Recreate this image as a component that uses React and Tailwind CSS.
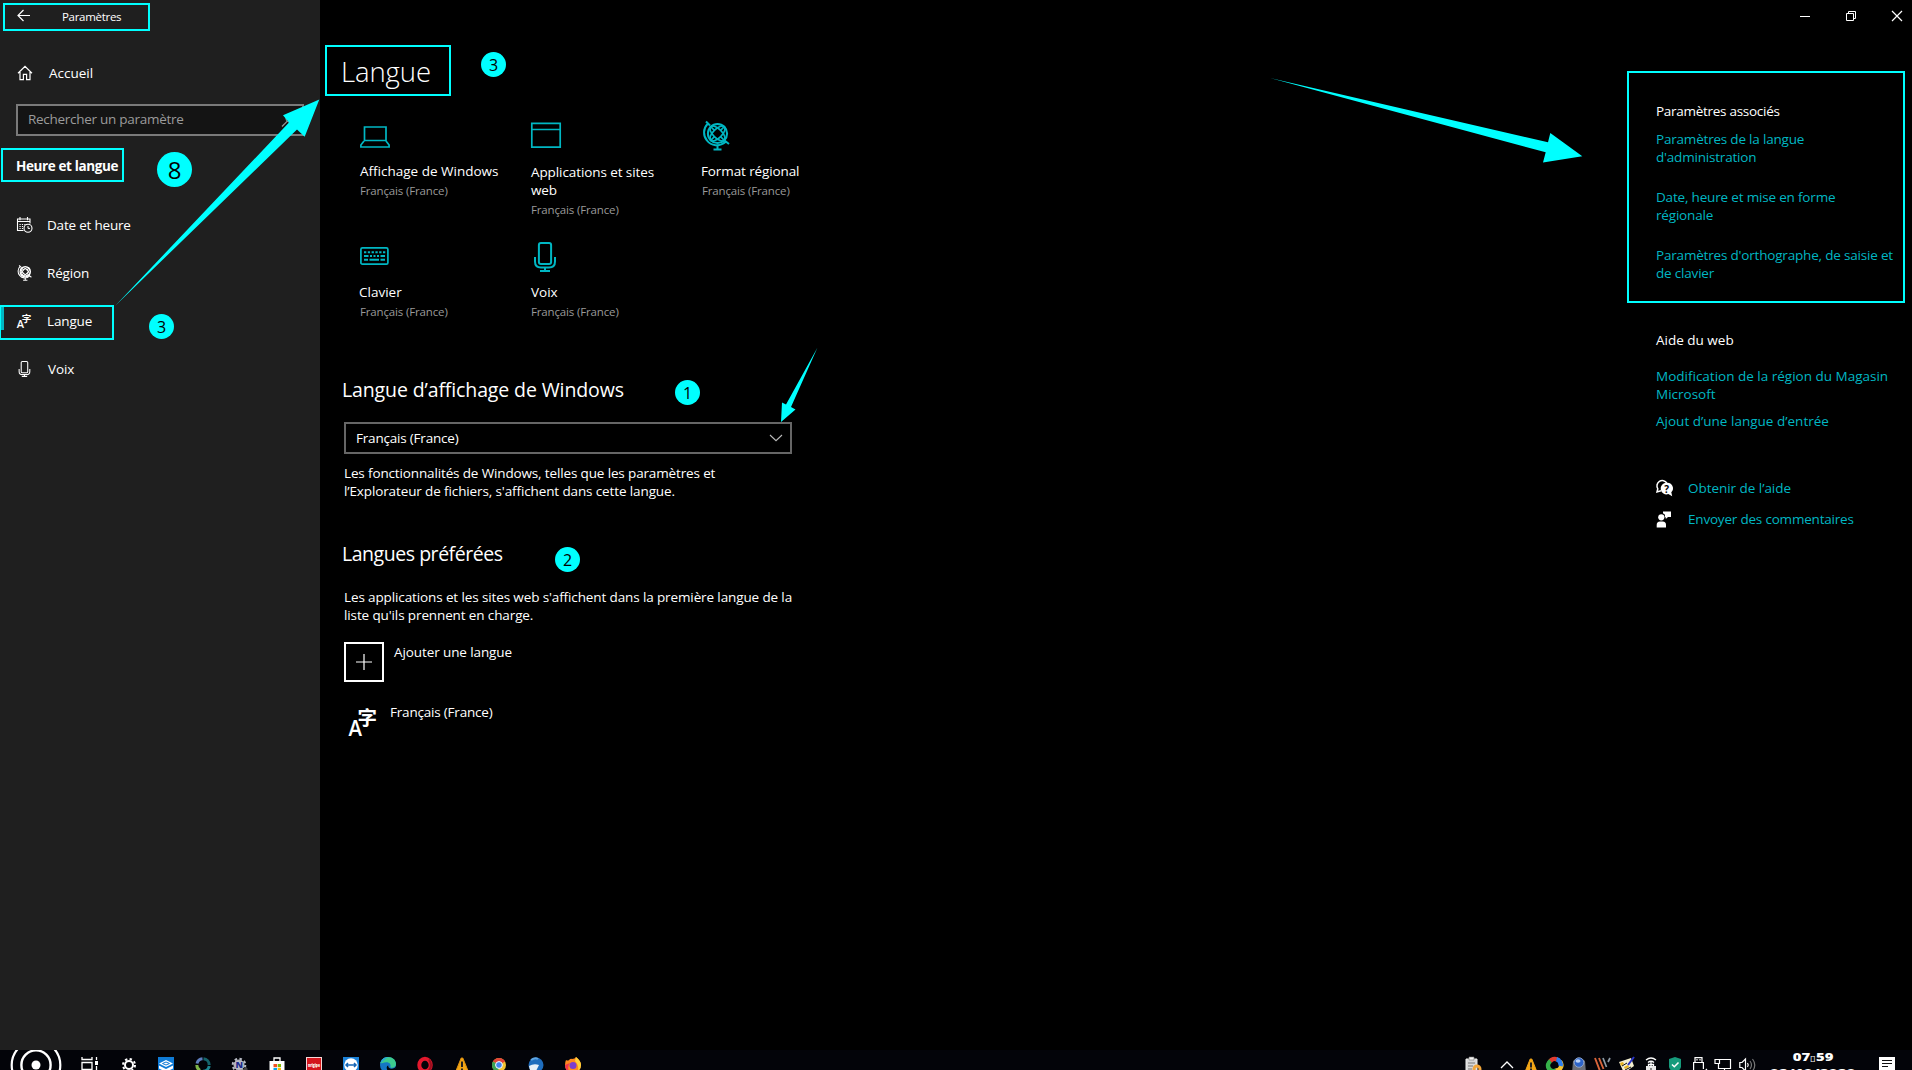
import React from "react";

const Svg = ({ className, box = "0 0 16 16", children }) => (
  <svg
    viewBox={box}
    fill="none"
    stroke="currentColor"
    className={`shrink-0 overflow-visible ${className}`}
  >
    {children}
  </svg>
);

/* ---------- settings icons ---------- */

const HomeIcon = () => (
  <Svg className="w-4 h-4">
    <path d="M1 8.2 8 1.4l7 6.8M3 7v7.6h3.4V9.4h3.2v5.2H13V7" strokeWidth="1.2" />
  </Svg>
);

const CalendarIcon = () => (
  <Svg className="w-4 h-4">
    <path d="M6.500 13.500H.5V2h12.500v4.500M.5 4.500h12.500M3 0v3.200M10.500 0v3.200" strokeWidth="1.1" />
    <path d="M2.500 7.500h7M2.500 9.500h4.500M2.500 11.500h3.500" strokeWidth="1.2" strokeDasharray="1.2 1.2" />
    <circle cx="11" cy="11.300" r="4" strokeWidth="1.1" />
    <path d="M11 9v2.400h2" strokeWidth="1" />
  </Svg>
);

const GlobeIcon = ({ className, bold }) => (
  <Svg className={className} box="0 0 30 30">
    <circle cx="15.5" cy="12.5" r="9.6" strokeWidth={bold ? 2.4 : 2} />
    <g strokeWidth={bold ? 2 : 1.7}>
      <ellipse cx="15.5" cy="12.5" rx="9.6" ry="4.500" transform="rotate(45 15.5 12.5)" />
      <ellipse cx="15.5" cy="12.5" rx="4.500" ry="9.6" transform="rotate(45 15.5 12.5)" />
      <path d="m8.700 5.700 4 4M18.300 15.300l4 4M22.300 5.700l-4 4M12.700 15.300l-4 4" />
    </g>
    <path d="M4 .5 8 4.500M22.500 19.500l4.500 3.500M5.500 3C1 7.500 1 15 5 19.500c4 5.500 12.500 6.500 18.500 1.500" strokeWidth="2" />
    <path d="M15.500 24v4M11.500 28.500h8" strokeWidth="2" />
  </Svg>
);

const MicIcon = ({ className }) => (
  <Svg className={className} box="0 0 30 30">
    <rect x="7.900" y="1" width="12.200" height="21" rx="2" strokeWidth="2" />
    <path d="M4 15v4.500q0 6 6 6h8q6 0 6-6V15M14 26v3M9 29h10" strokeWidth="2" />
  </Svg>
);

const LaptopIcon = () => (
  <Svg className="w-[30px] h-[30px]" box="0 0 30 30">
    <path d="M4.500 19.500v-13.500h21.500v13.500M4 19.500h22.500M4 20 .9 24v2h28.200v-2L26 20" strokeWidth="1.700" />
  </Svg>
);

const WindowIcon = () => (
  <Svg className="w-[30px] h-[30px]" box="0 0 30 30">
    <path d="M.8 2.300h28.400v23.900H.8zM.8 8.500h28.400" strokeWidth="1.700" />
  </Svg>
);

const KeyboardIcon = () => (
  <Svg className="w-[30px] h-[30px]" box="0 0 30 30">
    <rect x=".9" y="5.900" width="27" height="16.300" rx="1.500" strokeWidth="1.700" />
    <g strokeWidth="2">
      <path d="M4 10.300h21.500" strokeDasharray="2.300 1.500" />
      <path d="M4 14h4.500M10 14h2M13.500 14h2M17 14h2M20.500 14H25" />
      <path d="M4 17.800h4M9.500 17.800h9.500M20.500 17.800H25" />
    </g>
  </Svg>
);

const LangIcon = ({ small }) =>
  small ? (
    <Svg className="w-4 h-[18px]" box="0 0 16 18">
      <g fill="currentColor" stroke="none">
        <text x="-0.300" y="16" fontSize="11" fontWeight="600" fontFamily="Open Sans">A</text>
        <text x="4.800" y="9.500" fontSize="9.500" fontWeight="700" fontFamily="Noto Sans CJK SC">字</text>
      </g>
    </Svg>
  ) : (
    <Svg className="w-[30px] h-[30px]" box="0 0 30 30">
      <g fill="currentColor" stroke="none">
        <text x="0.500" y="28.500" fontSize="21" fontWeight="600" fontFamily="Open Sans" textLength="13.500" lengthAdjust="spacingAndGlyphs">A</text>
        <text x="9.500" y="17.500" fontSize="19.500" fontWeight="700" fontFamily="Noto Sans CJK SC">字</text>
      </g>
    </Svg>
  );

const HelpIcon = () => (
  <Svg className="w-[17px] h-[17px]" box="0 0 17 17">
    <path d="M5 10.800 1 12l.8-3.200A5.300 5.300 0 1 1 10.800 3" strokeWidth="1.500" />
    <path d="M10.500 2.800a5.800 5.800 0 1 0 1.800 11.300l3.900 2.200-.9-4a5.600 5.600 0 0 0-4.800-9.500z" fill="#fff" stroke="none" />
    <text x="8.200" y="12.500" fontSize="10" fontWeight="700" fontFamily="Open Sans" fill="#000" stroke="none">?</text>
  </Svg>
);

const FeedbackIcon = () => (
  <Svg className="w-[17px] h-[17px]" box="0 0 17 17">
    <g fill="#fff" stroke="none">
      <path d="M7 0.500h8v5.500h-3L9.800 8V6.500L8.800 6 9 3.800 7 2.300z" />
      <circle cx="5.300" cy="6.300" r="3.100" />
      <path d="M.7 16.500v-2.500q0-3.500 3.300-3.500h2.700q3.300 0 3.300 3.500v2.500z" />
    </g>
  </Svg>
);

/* ---------- annotations ---------- */

const Frame = ({ className }) => (
  <div className={`absolute border-2 border-[#00ffff] ${className}`} />
);

const Badge = ({ className, n }) => (
  <div
    className={`absolute rounded-full bg-[#00ffff] text-black flex items-center justify-center ${className}`}
  >
    {n}
  </div>
);

const Annotations = () => (
  <>
    <Frame className="left-[3px] top-[3px] w-[147px] h-[28px]" />
    <Frame className="left-[1px] top-[148px] w-[123px] h-[34px]" />
    <Frame className="left-[-1px] top-[305px] w-[115px] h-[35px]" />
    <Frame className="left-[325px] top-[45px] w-[126px] h-[51px]" />
    <Frame className="left-[1627px] top-[71px] w-[278px] h-[232px]" />
    <Badge n="8" className="left-[157px] top-[152px] w-[35px] h-[35px] text-[24px]" />
    <Badge n="3" className="left-[149px] top-[314px] w-[25px] h-[25px] text-[16px]" />
    <Badge n="3" className="left-[481px] top-[52px] w-[25px] h-[25px] text-[16px]" />
    <Badge n="1" className="left-[675px] top-[380px] w-[25px] h-[25px] text-[16px]" />
    <Badge n="2" className="left-[555px] top-[547px] w-[25px] h-[25px] text-[16px]" />
    <svg
      viewBox="0 0 1912 1070"
      className="absolute inset-0 w-[1912px] h-[1070px] pointer-events-none"
      fill="#00ffff"
    >
      <path d="M115 306 289 122.500 283 115.300 319.300 99.500 304.700 136.700 297 129.500z" />
      <path d="M817.500 347.500 786 404.500 782 402.500 781 422 795.500 409.500 791 407z" />
      <path d="M1266 77 1548 142.300 1550.300 133 1582.300 156.300 1543 162.400 1545.700 152.300z" />
    </svg>
  </>
);

/* ---------- sidebar ---------- */

const navItems = [
  { label: "Date et heure", icon: <CalendarIcon />, text: "left-[47px] tracking-[-0.2px]" },
  { label: "Région", icon: <GlobeIcon className="w-4 h-4" bold />, text: "left-[47px] tracking-[-0.17px]" },
  { label: "Langue", icon: <LangIcon small />, text: "left-[47px] tracking-[-0.15px]", active: true },
  { label: "Voix", icon: <MicIcon className="w-4 h-4" />, text: "left-[48px] tracking-[-0.1px]" },
];

const Sidebar = () => (
  <aside className="w-[320px] shrink-0 h-full bg-[#1f1f1f] flex flex-col">
    <div className="flex items-center h-8 pl-[17px]">
      <Svg className="w-[14px] h-[14px]" box="0 0 14 14">
        <path d="M13 6.500H1.200M6.500 1 1 6.500 6.500 12" strokeWidth="1.200" />
      </Svg>
      <span className="ml-[31px] mt-px text-[11.5px] leading-4 tracking-[-0.3px]">Paramètres</span>
    </div>

    <div className="flex items-center mt-[32px] h-[18px] pl-[17px]">
      <HomeIcon />
      <span className="ml-4">Accueil</span>
    </div>

    <div className="ml-4 mt-[22px] w-[288px] h-8 shrink-0 border-2 border-[#7a7a7a] bg-[#141414] flex items-center justify-between pl-[10px] pr-[5px] text-[#9b9b9b]">
      <span className="tracking-[-0.28px] -mt-0.5">Rechercher un paramètre</span>
      <Svg className="w-4 h-4">
        <circle cx="9.500" cy="6" r="4.500" strokeWidth="1.200" />
        <path d="M6.300 9.200 1 14.500" strokeWidth="1.200" />
      </Svg>
    </div>

    <div className="mt-[21px] ml-4 font-bold tracking-[-0.38px]">Heure et langue</div>

    <nav className="mt-[26px]">
      {navItems.map((item) => (
        <div key={item.label} className="flex items-center h-12 pb-px">
          <span
            className={`w-1 h-6 mr-[13px] mb-[6px] ${item.active ? "bg-[#00b7c3]" : "bg-transparent"}`}
          />
          {item.icon}
          <span className={`absolute ${item.text}`}>{item.label}</span>
        </div>
      ))}
    </nav>
  </aside>
);

/* ---------- main ---------- */

const tiles = [
  { icon: <LaptopIcon />, lines: ["Affichage de Windows"], text: "pl-px tracking-normal" },
  { icon: <WindowIcon />, lines: ["Applications et sites", "web"], text: "pl-px tracking-[-0.09px]" },
  { icon: <GlobeIcon className="w-[30px] h-[30px]" />, lines: ["Format régional"], text: "tracking-[-0.11px]" },
  { icon: <KeyboardIcon />, lines: ["Clavier"], text: "tracking-normal" },
  { icon: <MicIcon className="w-[30px] h-[30px]" />, lines: ["Voix"], text: "pl-px tracking-normal" },
];

const Content = () => (
  <section className="w-[500px] pl-[22px]">
    <h1 className="mt-[22px] -ml-px text-[27.5px] leading-9 font-light tracking-[-0.1px]">
      Langue
    </h1>

    <div className="mt-[31px] ml-[17px] grid grid-cols-[171px_171px_171px] auto-rows-[121px]">
      {tiles.map((tile) => (
        <div key={tile.lines[0]}>
          <div className="text-[#00b7c3] ml-px">{tile.icon}</div>
          <div className={tile.lines.length > 1 ? "mt-3" : "mt-[11px]"}>
            {tile.lines.map((line) => (
              <div key={line} className={`whitespace-nowrap ${tile.text}`}>
                {line}
              </div>
            ))}
          </div>
          <div className="mt-[3px] ml-px text-[11.5px] leading-4 tracking-[-0.15px] text-[#999]">
            Français (France)
          </div>
        </div>
      ))}
    </div>

    <h2 className="mt-[14px] text-[19.5px] leading-[26px] tracking-[-0.12px]">
      Langue d’affichage de Windows
    </h2>
    <div className="mt-[19px] ml-0.5 w-[448px] h-8 border-2 border-[#666] flex items-center justify-between pl-[10px] pr-[7px]">
      <span className="tracking-[-0.2px]">Français (France)</span>
      <Svg className="w-[14px] h-[14px] text-[#bbb]" box="0 0 14 14">
        <path d="m1 4 6 5.700 6-5.700" strokeWidth="1.100" />
      </Svg>
    </div>
    <div className="mt-[10px] ml-0.5 whitespace-nowrap">
      <div className="tracking-[-0.14px]">
        Les fonctionnalités de Windows, telles que les paramètres et
      </div>
      <div className="tracking-[-0.12px]">
        l’Explorateur de fichiers, s'affichent dans cette langue.
      </div>
    </div>

    <h2 className="mt-[41px] text-[19.5px] leading-[26px] tracking-[-0.46px]">
      Langues préférées
    </h2>
    <div className="mt-[21px] ml-0.5 whitespace-nowrap tracking-[-0.12px]">
      <div>Les applications et les sites web s'affichent dans la première langue de la</div>
      <div>liste qu'ils prennent en charge.</div>
    </div>

    <div className="mt-[18px] ml-0.5 flex">
      <div className="w-10 h-10 border-2 border-white flex items-center justify-center">
        <Svg className="w-4 h-4">
          <path d="M8 0v16M0 8h16" strokeWidth="1.200" />
        </Svg>
      </div>
      <span className="ml-[10px] mt-px tracking-[-0.1px]">Ajouter une langue</span>
    </div>
    <div className="mt-[21px] ml-[6px] flex">
      <div className="mt-[4px]">
        <LangIcon />
      </div>
      <span className="ml-3 tracking-[-0.2px]">Français (France)</span>
    </div>
  </section>
);

const Related = () => (
  <section className="ml-auto w-[256px] pt-[70px] whitespace-nowrap text-[#00b7c3]">
    <div className="text-white tracking-[-0.28px]">Paramètres associés</div>
    <div className="mt-[10px] tracking-[-0.2px]">
      <div>Paramètres de la langue</div>
      <div>d'administration</div>
    </div>
    <div className="mt-[22px] tracking-[-0.18px]">
      <div>Date, heure et mise en forme</div>
      <div>régionale</div>
    </div>
    <div className="mt-[22px] tracking-[-0.19px]">
      <div>Paramètres d'orthographe, de saisie et</div>
      <div>de clavier</div>
    </div>

    <div className="mt-[49px] text-white">Aide du web</div>
    <div className="mt-[18px] tracking-normal">
      <div>Modification de la région du Magasin</div>
      <div>Microsoft</div>
    </div>
    <div className="mt-[9px] tracking-[0.01px]">Ajout d’une langue d’entrée</div>

    <div className="mt-[49px] flex items-center text-white">
      <HelpIcon />
      <span className="ml-[15px] tracking-[-0.04px] text-[#00b7c3]">Obtenir de l’aide</span>
    </div>
    <div className="mt-[13px] flex items-center">
      <FeedbackIcon />
      <span className="ml-[15px] tracking-[-0.2px]">Envoyer des commentaires</span>
    </div>
  </section>
);

const TitleBar = () => (
  <div className="flex h-8 justify-end -mr-2">
    <div className="w-[46px] flex items-center justify-center">
      <div className="w-[10px] h-px bg-white" />
    </div>
    <div className="w-[46px] flex items-center justify-center">
      <Svg className="w-[10px] h-[10px]" box="0 0 10 10">
        <path d="M.5 2.500h7v7h-7zM2.500 2V.5h7v7H8" />
      </Svg>
    </div>
    <div className="w-[46px] flex items-center justify-center">
      <Svg className="w-[10px] h-[10px]" box="0 0 10 10">
        <path d="m0 0 10 10M10 0 0 10" strokeWidth="1.200" />
      </Svg>
    </div>
  </div>
);

/* ---------- taskbar ---------- */

const apps = [
  // settings
  <Svg>
    <circle cx="8" cy="8" r="4" strokeWidth="2" />
    <circle cx="8" cy="8" r="6" strokeWidth="2" strokeDasharray="2.350 2.350" />
  </Svg>,
  // box
  <Svg>
    <path d="M0 0h16v16H0z" fill="#0f7bd6" stroke="none" />
    <path d="m8 3 7 3.500-7 3.500-7-3.500zM1 8.500l7 3.500 7-3.500v3L8 15l-7-3.500z" fill="#fff" stroke="none" />
    <path d="m4.500 6.500 3.500-1.500 3.500 1.500L8 8z" stroke="#0f7bd6" />
  </Svg>,
  // ring
  <Svg>
    <g strokeWidth="3">
      <path d="M8.500 1.800A6.200 6.200 0 0 1 14.200 8" stroke="#14636a" />
      <path d="M7.500 1.800A6.200 6.200 0 0 0 2 6.500" stroke="#5f7fc0" />
      <path d="M1.800 8A6.200 6.200 0 0 0 5 13.500" stroke="#7db548" />
      <path d="M14.200 9A6.200 6.200 0 0 1 8 14.200" stroke="#1c8792" />
    </g>
  </Svg>,
  // gear with letter
  <Svg>
    <circle cx="7" cy="8" r="5" fill="#b9bcc4" stroke="#b9bcc4" strokeWidth="1" />
    <circle cx="7" cy="8" r="6.300" stroke="#b9bcc4" strokeWidth="2" strokeDasharray="2.500 2.400" />
    <text x="3.500" y="10.500" fontSize="9" fontWeight="800" fontFamily="Open Sans" fill="#1d2a8c" stroke="none">N</text>
    <path d="m9 16 6-5" stroke="#444" strokeWidth="3" />
  </Svg>,
  // store
  <Svg>
    <path d="M5 4V1h6v3" strokeWidth="1.300" />
    <path d="M.5 4h15v12H.5z" fill="#fff" stroke="none" />
    <path d="M4.500 7H8v3.200H4.500z" fill="#f25022" stroke="none" />
    <path d="M8.700 7H12v3.200H8.700z" fill="#7fba00" stroke="none" />
    <path d="M4.500 11H8v3H4.500z" fill="#00a4ef" stroke="none" />
    <path d="M8.700 11H12v3H8.700z" fill="#ffb900" stroke="none" />
  </Svg>,
  // red
  <Svg>
    <path d="M0 0h16v16H0z" fill="#f4d7d7" stroke="none" />
    <path d="M1 1h14v15H1z" fill="#d3151b" stroke="none" />
    <text x="2" y="10" fontSize="5" fontWeight="800" fontFamily="Open Sans" fill="#fff" stroke="none" textLength="12" lengthAdjust="spacingAndGlyphs">nrigipe</text>
  </Svg>,
  // teamviewer
  <Svg>
    <path d="M0 0h16v16H0z" fill="#1b82d8" stroke="none" />
    <circle cx="8" cy="8" r="6.800" fill="#fff" stroke="none" />
    <path d="M3 8h10M5 6 3 8l2 2M11 6l2 2-2 2" stroke="#1565b5" strokeWidth="1.500" />
  </Svg>,
  // edge
  <Svg>
    <circle cx="8" cy="8" r="8" fill="#1577c5" stroke="none" />
    <path d="M.3 6.500C1.500 2 4.500 0 8.300 0 12.500 0 16 3 16 7c0 2.500-2 3.800-4 3.800-1.500 0-2-.8-1.500-1.600C11 7.500 9.500 5.200 6.500 5.200 3.500 5.200 1 6.500.3 6.500z" fill="#3ccb8d" stroke="none" />
    <path d="M.3 6.500C1.500 2 4.500 0 8.300 0 5 1.500 3 4 .3 6.500z" fill="#27a5dc" stroke="none" />
    <path d="M16 9.500q-1 2-4 2.200C9 11.800 8 10 8.300 8.500 6 9 6 13 9.500 15.500 13 15.500 16 12.500 16 9.500z" fill="#030508" stroke="none" />
  </Svg>,
  // opera
  <Svg>
    <ellipse cx="8" cy="8" rx="5.700" ry="6.300" stroke="#e3182d" strokeWidth="4" />
    <path d="M12 2.500q4 5.500 0 11" stroke="#9c0f1f" strokeWidth="2" />
  </Svg>,
  // warning
  <Svg>
    <path d="M7.200 1h1.600L14.500 15h-13z" fill="#f2a516" stroke="#e2930f" strokeLinejoin="round" />
    <path d="M8 4.500v5.500M8 11.500v2" stroke="#222" strokeWidth="2" />
  </Svg>,
  // chrome
  <Svg>
    <circle cx="8" cy="8" r="7" fill="#f3c231" stroke="none" />
    <path d="M1.900 4.500a7 7 0 0 1 12.200 0L8 8z" fill="#e24438" stroke="none" />
    <path d="M1.900 4.500a7 7 0 0 0 5.300 10.500L8 8z" fill="#3ba255" stroke="none" />
    <circle cx="8" cy="8" r="3.400" fill="#4286f0" stroke="#fff" />
  </Svg>,
  // thunderbird
  <Svg>
    <circle cx="8" cy="8" r="7.500" fill="#1f6dbd" stroke="none" />
    <path d="M1 9q5-3 10-1l-3 6q-4 2-6-1z" fill="#e9f1f8" stroke="none" />
    <path d="M3 3q4-3 7-1" stroke="#5ea6e4" strokeWidth="2" />
  </Svg>,
  // firefox
  <Svg>
    <path d="M1 3q2 1 3 0 2-2 3-1 3 0 4-2 5 4 5 8a8 8 0 0 1-16 0q0-3 1-5z" fill="#ff8a1e" stroke="none" />
    <path d="M11 0q5 4 5 8 0 4-3 6 1-6-3-10z" fill="#ffd23a" stroke="none" />
    <circle cx="8" cy="8.500" r="3.500" fill="#7a3fd0" stroke="none" />
    <path d="M0 8q0 5 4 7-2-6 1-9z" fill="#f4364c" stroke="none" />
  </Svg>,
];

const tray = [
  // clipboard
  <Svg>
    <path d="M1 2h11v14H1z" fill="#d8d8d8" stroke="#efefef" />
    <path d="M4 0h5v3H4z" fill="#f4f4f4" stroke="#777" strokeWidth=".6" />
    <path d="M3 6h7M3 9h5M3 12h4" stroke="#777" />
    <circle cx="12" cy="12" r="3" stroke="#f3a63a" strokeWidth="3" />
  </Svg>,
  <Svg>
    <path d="m2 11 6-6 6 6" strokeWidth="1.300" />
  </Svg>,
  // warning
  <Svg>
    <path d="M7.200 2h1.600L14 15H2z" fill="#f2a516" stroke="#f2a516" strokeLinejoin="round" />
    <path d="M8 5.500v5M8 11.500v2" stroke="#222" strokeWidth="2" />
  </Svg>,
  // colour swirl
  <Svg>
    <g strokeWidth="4.500">
      <path d="M13 4.500A5.500 5.500 0 0 1 8 13.500" stroke="#f5c330" />
      <path d="M3 4.500A5.500 5.500 0 0 1 10 2.500" stroke="#e23b2e" />
      <path d="M9.500 2.300A5.500 5.500 0 0 1 13.500 9" stroke="#2d7ff0" />
      <path d="M9 13.500A5.500 5.500 0 0 1 3.500 4" stroke="#35b14a" />
    </g>
  </Svg>,
  // webcam
  <Svg>
    <path d="M2 4q6-6 12 0l1 12H1z" fill="#6b6f78" stroke="none" />
    <circle cx="8" cy="5.500" r="4.800" fill="#2c63c8" stroke="#9fb1cf" strokeWidth=".8" />
    <ellipse cx="7" cy="4" rx="2.500" ry="1.800" fill="#bcd3f7" stroke="none" />
  </Svg>,
  // stripes
  <Svg>
    <path d="m0 1 5 13M4 1l4.500 11" stroke="#d9653b" strokeWidth="1.900" />
    <path d="m8 1 3.500 9M15 1l-2 4" stroke="#8c9aa5" strokeWidth="1.700" />
  </Svg>,
  // notes
  <Svg>
    <path d="M0 5 12 1l3 8-10 7z" fill="#f4efcf" stroke="none" />
    <path d="m1 6 3-1 1 2-3 2zM5 10l4-2 1 2-4 2z" fill="#e8b21e" stroke="none" />
    <path d="m3 9 5-3M6 13l6-3" stroke="#111" />
    <path d="m15 0-6 8" stroke="#2a35c8" strokeWidth="2" />
  </Svg>,
  // wifi lock
  <Svg>
    <path d="M3 3q5-4 10 0M5 5.500q3-2.500 6 0" strokeWidth="1.400" />
    <path d="M3 9h10v7H3z" fill="#e9e9e9" stroke="none" />
    <path d="M8 5v5M5.500 9V7.500h5V9" strokeWidth="1.300" />
    <path d="M8 11v4" stroke="#222" />
  </Svg>,
  // shield
  <Svg>
    <path d="M8 0 14 2v8q-1 4-6 6-5-2-6-6V2z" fill="#169b7c" stroke="none" />
    <path d="m5 7.500 2.300 2.300L11.500 5.500" strokeWidth="1.500" />
  </Svg>,
  // usb
  <Svg>
    <path d="M4 5V.6h7V5M2.600 16V5.500h9.800V12" strokeWidth="1.200" />
    <path d="M6 2v1.500M9 2v1.500M12 16l4-4" strokeWidth="1.200" />
  </Svg>,
  // network
  <Svg>
    <path d="M5 2.500h10.500v9H3.500V7M0 2.500h4.500v4H0zM6 15.500h7M9.500 12v3.500" strokeWidth="1.200" />
  </Svg>,
  // volume
  <Svg>
    <path d="M.8 5.500H3L6.500 2v12L3 10.500H.8z" strokeWidth="1.200" />
    <path d="M8.500 6q1.500 2 0 4" strokeWidth="1.200" />
    <path d="M11 4q3 4 0 8M13.500 2q4.500 6 0 12" stroke="#777" strokeWidth="1.200" />
  </Svg>,
];

const Taskbar = () => (
  <footer className="h-5 shrink-0 bg-[#030409] flex overflow-hidden">
    <div className="w-[72px] flex justify-center">
      <Svg className="w-[52px] h-[52px] mt-[-11px]" box="0 0 52 52">
        <circle cx="26" cy="26" r="24.300" strokeWidth="2.200" />
        <circle cx="26" cy="26" r="14.600" strokeWidth="2.400" />
        <circle cx="26" cy="26" r="4.500" fill="#fff" stroke="none" />
      </Svg>
    </div>
    <div className="w-[38px] pt-[7px] pl-[9px]">
      <Svg className="w-[18px] h-4" box="0 0 18 16">
        <path d="M1 0v2.500h10V0M1 5.500h10v7H1zM1 16v-1h10v1M15.500 0v3M15.500 9v7" strokeWidth="1.300" />
        <path d="M14 4h3v4h-3z" fill="#fff" stroke="none" />
      </Svg>
    </div>
    <div className="flex pt-[7px]">
      {apps.map((icon, i) => (
        <div key={i} className="w-[37px] h-4 flex justify-center *:w-4 *:h-4">
          {icon}
        </div>
      ))}
    </div>
    <div className="ml-auto flex pt-[7px]">
      {tray.map((icon, i) => (
        <div
          key={i}
          className={`h-4 flex justify-center *:w-4 *:h-4 ${i === 0 ? "w-11" : "w-6"}`}
        >
          {icon}
        </div>
      ))}
    </div>
    <div className="w-[105px] pl-[3px] flex flex-col items-center font-extrabold whitespace-nowrap">
      <span className="text-[11px] leading-[13px] scale-x-[1.35]">
        07<span className="font-['DejaVu_Sans'] font-normal text-[8px]">▯</span>59
      </span>
      <span className="text-[11px] leading-[13px] mt-px scale-x-[1.4]">02/10/2020</span>
    </div>
    <div className="w-[49px] pt-[7px] pl-[15px] mr-[-1px]">
      <Svg className="w-4 h-4">
        <path d="M0 0h16v13h-4v3l-3-3H0z" fill="#fff" stroke="none" />
        <path d="M3 3.500h10M3 6.500h10M3 9.500h6" stroke="#111" strokeWidth="1.200" />
      </Svg>
    </div>
  </footer>
);

export default function App() {
  return (
    <div className="relative w-full h-[1070px] overflow-hidden bg-black text-white flex flex-col font-['Open_Sans',sans-serif] text-[13.5px] leading-[18px]">
      <div className="flex h-[1050px] shrink-0">
        <Sidebar />
        <main className="flex-1 flex flex-col">
          <TitleBar />
          <div className="flex">
            <Content />
            <Related />
          </div>
        </main>
      </div>
      <Taskbar />
      <Annotations />
    </div>
  );
}
